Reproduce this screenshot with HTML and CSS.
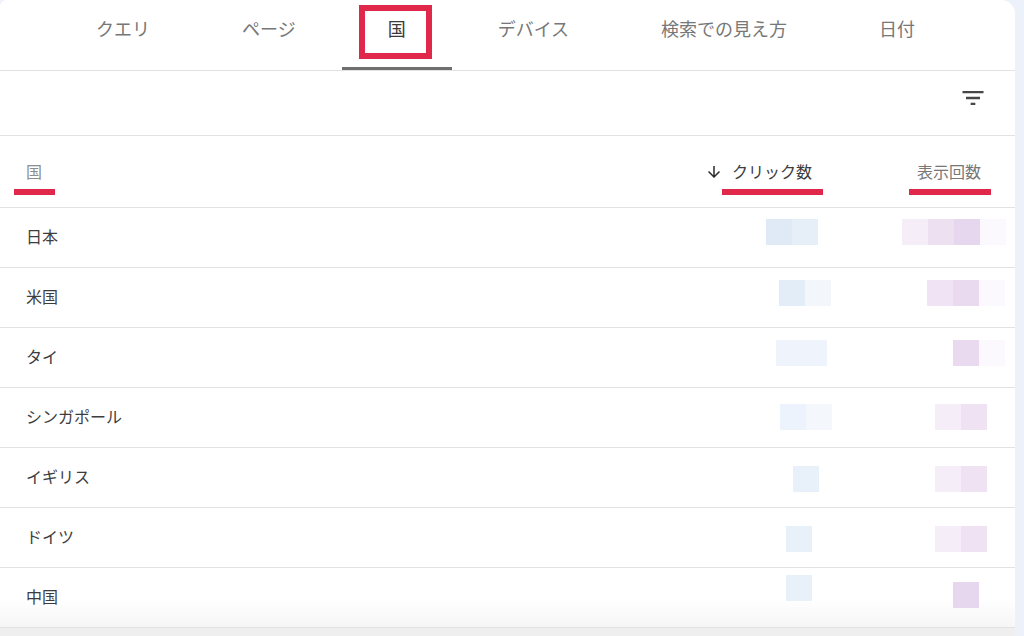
FILE: index.html
```html
<!DOCTYPE html>
<html lang="ja">
<head>
<meta charset="utf-8">
<title>国</title>
<link rel="stylesheet" href="styles.css">
</head>
<body>
<div class="page">
  <div class="card">
    <nav class="tabs">
      <div class="tab">クエリ</div>
      <div class="tab">ページ</div>
      <div class="tab active">国</div>
      <div class="tab">デバイス</div>
      <div class="tab">検索での見え方</div>
      <div class="tab">日付</div>
      <span class="redbox"></span>
    </nav>
    <div class="toolbar">
      <svg class="filter-icon" viewBox="0 0 24 24" aria-hidden="true"><path d="M3 6h18v2H3zM6 11h12v2H6zM10 16h4v2h-4z"/></svg>
    </div>
    <div class="table">
      <div class="row head">
        <div class="cell name">国</div>
        <div class="cell num clicks sorted">
          <svg class="arrow" viewBox="0 0 24 24" aria-hidden="true"><path d="M20 12l-1.41-1.41L13 16.17V4h-2v12.17l-5.58-5.59L4 12l8 8 8-8z"/></svg>
          <span>クリック数</span>
        </div>
        <div class="cell num impr">表示回数</div>
        <span class="mark m1"></span>
        <span class="mark m2"></span>
        <span class="mark m3"></span>
      </div>

      <div class="row">
        <div class="cell name">日本</div>
        <div class="cell data"><div class="mosaic" style="margin:11px 0 0 61px"><i class="b c1"></i><i class="b c2"></i></div></div>
        <div class="cell data"><div class="mosaic" style="margin:11px 0 0 47px"><i class="b p1"></i><i class="b p3"></i><i class="b p4"></i><i class="b p0"></i></div></div>
      </div>
      <div class="row">
        <div class="cell name">米国</div>
        <div class="cell data"><div class="mosaic" style="margin:12px 0 0 74px"><i class="b c3"></i><i class="b c5"></i></div></div>
        <div class="cell data"><div class="mosaic" style="margin:12px 0 0 72px"><i class="b p2"></i><i class="b p3b"></i><i class="b p0"></i></div></div>
      </div>
      <div class="row">
        <div class="cell name">タイ</div>
        <div class="cell data"><div class="mosaic" style="margin:12px 0 0 71px"><i class="b c4 wide"></i></div></div>
        <div class="cell data"><div class="mosaic" style="margin:12px 0 0 98px"><i class="b p3b"></i><i class="b p0"></i></div></div>
      </div>
      <div class="row">
        <div class="cell name">シンガポール</div>
        <div class="cell data"><div class="mosaic" style="margin:16px 0 0 75px"><i class="b c6"></i><i class="b c7"></i></div></div>
        <div class="cell data"><div class="mosaic" style="margin:16px 0 0 80px"><i class="b p5"></i><i class="b p6"></i></div></div>
      </div>
      <div class="row">
        <div class="cell name">イギリス</div>
        <div class="cell data"><div class="mosaic" style="margin:18px 0 0 88px"><i class="b c8"></i></div></div>
        <div class="cell data"><div class="mosaic" style="margin:18px 0 0 80px"><i class="b p5"></i><i class="b p6"></i></div></div>
      </div>
      <div class="row">
        <div class="cell name">ドイツ</div>
        <div class="cell data"><div class="mosaic" style="margin:18px 0 0 81px"><i class="b c8"></i></div></div>
        <div class="cell data"><div class="mosaic" style="margin:18px 0 0 80px"><i class="b p5"></i><i class="b p6"></i></div></div>
      </div>
      <div class="row last">
        <div class="cell name">中国</div>
        <div class="cell data"><div class="mosaic" style="margin:7px 0 0 81px"><i class="b c8"></i></div></div>
        <div class="cell data"><div class="mosaic" style="margin:14px 0 0 98px"><i class="b p4"></i></div></div>
      </div>
    </div>
    <div class="footer"></div>
  </div>
</div>
</body>
</html>
```

FILE: styles.css
```css
* { box-sizing: border-box; }

html, body {
  margin: 0;
  padding: 0;
}

body {
  width: 1024px;
  height: 636px;
  overflow: hidden;
  background: #edf1fa;
  font-family: "Noto Sans CJK JP", "Noto Sans", sans-serif;
}

.page {
  display: flex;
  height: 636px;
}

.card {
  width: 1015px;
  height: 636px;
  background: #ffffff;
  border-top-left-radius: 6px;
  border-top-right-radius: 14px;
  display: flex;
  flex-direction: column;
  overflow: hidden;
}

/* Tabs */
.tabs {
  position: relative;
  display: flex;
  padding-left: 50px;
  height: 71px;
  border-bottom: 1px solid #e2e2e2;
}

.tab {
  height: 70px;
  padding: 16px 46px 0;
  font-size: 18px;
  line-height: 24px;
  color: #777777;
  white-space: nowrap;
}

.tab.active {
  color: #3a3a3a;
  box-shadow: inset 0 -3px 0 #6f6f6f;
}

.redbox {
  position: absolute;
  left: 359px;
  top: 5px;
  width: 73px;
  height: 54px;
  border: 6px solid #e0284a;
}

/* Toolbar */
.toolbar {
  height: 65px;
  border-bottom: 1px solid #e2e2e2;
  display: flex;
  justify-content: flex-end;
  align-items: flex-start;
  padding: 13px 28px 0 0;
}

.filter-icon {
  width: 28px;
  height: 28px;
  fill: #474747;
}

/* Table */
.row {
  position: relative;
  display: grid;
  grid-template-columns: 1fr 150px 160px;
  height: 60px;
  border-bottom: 1px solid #e2e2e2;
  font-size: 16px;
  color: #3d3d3d;
}

.row.head {
  height: 72px;
  align-items: start;
  padding-top: 23px;
}

.cell {
  line-height: 24px;
}

.cell.name {
  padding-left: 26px;
  align-self: center;
  margin-bottom: 4px;
}

.head .cell.name {
  align-self: start;
  margin-bottom: 0;
  color: #8d8d8d;
}

.cell.num {
  display: flex;
  justify-content: flex-end;
  align-items: center;
  height: 24px;
  color: #777777;
}

.cell.num.clicks { padding-right: 43px; }
.cell.num.impr { padding-right: 34px; }

.cell.num.sorted { color: #3d3d3d; }

.arrow {
  width: 18px;
  height: 18px;
  fill: #2b2b2b;
  margin-right: 9px;
  margin-top: 2px;
}

.mark {
  position: absolute;
  top: 53px;
  height: 6px;
  background: #e0284a;
}

.m1 { left: 14px; width: 41px; }
.m2 { left: 722px; width: 101px; }
.m3 { left: 909px; width: 82px; }

/* Mosaic (pixelated numbers) */
.cell.data {
  display: flex;
  align-items: flex-start;
}

.mosaic {
  display: flex;
}

.b {
  display: block;
  width: 26px;
  height: 26px;
}

.b.wide { width: 51px; }

.c1 { background: #dfeaf6; }
.c2 { background: #e6eef8; }
.c3 { background: #e2edf8; }
.c4 { background: #eff4fc; }
.c5 { background: #f3f7fc; }
.c6 { background: #edf3fc; }
.c7 { background: #f4f8fd; }
.c8 { background: #e8f0fa; }

.p0 { background: #fbf9fd; }
.p1 { background: #f5eef8; }
.p2 { background: #efe3f4; }
.p3 { background: #ece0f1; }
.p3b { background: #e9daef; }
.p4 { background: #e6d6ee; }
.p5 { background: #f5eef8; }
.p6 { background: #eee2f3; }

.row.last {
  background: linear-gradient(to bottom, #ffffff 50%, #f6f6f6 100%);
}

.footer {
  flex: 1;
  background: #efefef;
}
```
